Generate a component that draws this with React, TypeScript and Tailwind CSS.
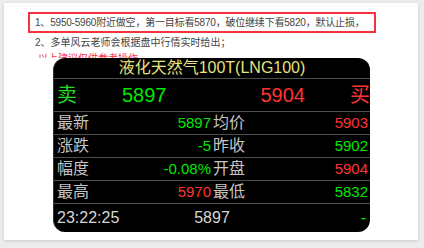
import React from "react";

const font = { fontFamily: '"Liberation Sans", "Noto Sans CJK SC", sans-serif' };

function Row({ l1, v1, c1, l2, v2, c2 }: { l1: string; v1: string; c1: string; l2: string; v2: string; c2: string }) {
  return (
    <div className="flex h-[23px] items-center border-b border-[#4d4d4d]">
      <div className="flex w-[158px] items-center justify-between pl-[3px] pr-[1px]">
        <span className="text-[16px] text-[#c4c4c4]">{l1}</span>
        <span className={`text-[15px] ${c1}`}>{v1}</span>
      </div>
      <div className="flex flex-1 items-center justify-between pl-[1px] pr-[2px]">
        <span className="text-[16px] text-[#c4c4c4]">{l2}</span>
        <span className={`text-[15px] ${c2}`}>{v2}</span>
      </div>
    </div>
  );
}

export default function App() {
  return (
    <div className="h-[248px] w-[424px] overflow-hidden bg-[#ececec] pl-[4px] pt-[3px]" style={font}>
      <div className="h-[237px] w-[414px] overflow-hidden bg-white pl-[24px] pt-[9px] shadow-[0_1px_3px_rgba(0,0,0,0.15)]">
        <div className="flex h-[21px] w-[348px] items-center border-2 border-[#f5333f] pl-[5px] text-[10px] leading-[16px] tracking-[-0.2px] text-[#444] whitespace-nowrap">
          1、5950-5960附近做空，第一目标看5870，破位继续下看5820，默认止损，
        </div>
        <div className="mt-[2px] pl-[7px] text-[10px] leading-[16px] text-[#444]">2、多单风云老师会根据盘中行情实时给出；</div>
        <div className="h-[7px] overflow-hidden pl-[10px] text-[10px] leading-[16px] text-[#f5333f]">以上建议仅供参考操作</div>
        <div className="ml-[25px] h-[174px] w-[317px] overflow-hidden rounded-[12px] border-l border-[#333] bg-black">
          <div className="flex h-[21px] items-center justify-center border-b border-[#4d4d4d] text-[16px] text-[#e8e27e]">
            液化天然气100T(LNG100)
          </div>
          <div className="flex h-[33px] items-center border-b border-[#4d4d4d] pl-[3px] text-[20px]">
            <span className="w-[65px] text-[#22dd22]">卖</span>
            <span className="text-[#00e800]">5897</span>
            <span className="flex-1" />
            <span className="text-[#ff3333]">5904</span>
            <span className="ml-[45px] w-[20px] text-[#ff3333]">买</span>
          </div>
          <Row l1="最新" v1="5897" c1="text-[#00e800]" l2="均价" v2="5903" c2="text-[#ff3333]" />
          <Row l1="涨跌" v1="-5" c1="text-[#00e800]" l2="昨收" v2="5902" c2="text-[#00e800]" />
          <Row l1="幅度" v1="-0.08%" c1="text-[#00e800]" l2="开盘" v2="5904" c2="text-[#ff3333]" />
          <Row l1="最高" v1="5970" c1="text-[#ff3333]" l2="最低" v2="5832" c2="text-[#00e800]" />
          <div className="grid h-[28px] grid-cols-3 items-center pb-[1px] text-[16px] text-[#d6d6d6]">
            <span className="pl-[3px]">23:22:25</span>
            <span className="text-center">5897</span>
            <span className="pr-[4px] text-right text-[#00e800]">-</span>
          </div>
        </div>
      </div>
    </div>
  );
}
